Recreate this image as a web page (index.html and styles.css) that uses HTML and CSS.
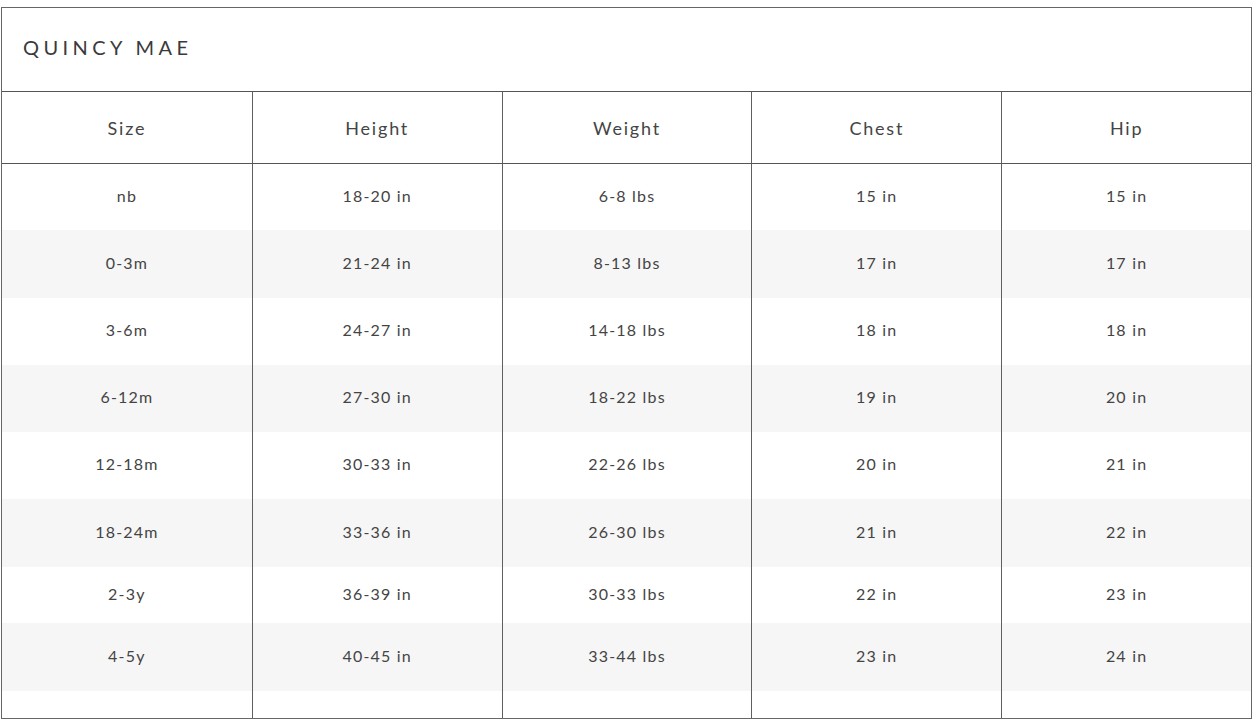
FILE: index.html
```html
<!DOCTYPE html>
<html>
<head>
<meta charset="utf-8">
<link rel="stylesheet" href="styles.css">
</head>
<body>
<div class="page">
<table class="chart">
  <colgroup><col><col><col><col><col></colgroup>
  <thead>
    <tr class="title-row"><th colspan="5" class="title">QUINCY MAE</th></tr>
    <tr class="head-row"><th>Size</th><th>Height</th><th>Weight</th><th>Chest</th><th>Hip</th></tr>
  </thead>
  <tbody>
    <tr class="r66"><td>nb</td><td>18-20 in</td><td>6-8 lbs</td><td>15 in</td><td>15 in</td></tr>
    <tr class="r68 alt"><td>0-3m</td><td>21-24 in</td><td>8-13 lbs</td><td>17 in</td><td>17 in</td></tr>
    <tr class="r67"><td>3-6m</td><td>24-27 in</td><td>14-18 lbs</td><td>18 in</td><td>18 in</td></tr>
    <tr class="r67 alt"><td>6-12m</td><td>27-30 in</td><td>18-22 lbs</td><td>19 in</td><td>20 in</td></tr>
    <tr class="r67"><td>12-18m</td><td>30-33 in</td><td>22-26 lbs</td><td>20 in</td><td>21 in</td></tr>
    <tr class="r68 alt"><td>18-24m</td><td>33-36 in</td><td>26-30 lbs</td><td>21 in</td><td>22 in</td></tr>
    <tr class="r56"><td>2-3y</td><td>36-39 in</td><td>30-33 lbs</td><td>22 in</td><td>23 in</td></tr>
    <tr class="r68 alt"><td>4-5y</td><td>40-45 in</td><td>33-44 lbs</td><td>23 in</td><td>24 in</td></tr>
    <tr class="r27"><td></td><td></td><td></td><td></td><td></td></tr>
  </tbody>
</table>
</div>
</body>
</html>
```
FILE: styles.css
```css
html, body {
  margin: 0;
  padding: 0;
  background: #ffffff;
}
.page {
  padding: 7px 0 0 1px;
}
.chart {
  width: 1251px;
  table-layout: fixed;
  border-collapse: separate;
  border-spacing: 0;
  border: 1px solid #666666;
  font-family: Lato, "Liberation Sans", sans-serif;
  font-weight: 400;
  color: #444444;
}
.chart th, .chart td {
  padding: 0;
  text-align: center;
  font-weight: 400;
  border-left: 1px solid #5f5f5f;
}
.chart th:first-child, .chart td:first-child {
  border-left: none;
}
.title-row th.title {
  height: 78px;
  padding-bottom: 5px;
  border-bottom: 1px solid #555555;
  text-align: left;
  padding-left: 21px;
  font-size: 20px;
  letter-spacing: 4.4px;
  color: #3a3a3a;
}
.head-row th {
  height: 71px;
  border-bottom: 1px solid #555555;
  font-size: 18px;
  letter-spacing: 1.8px;
}
.chart td {
  font-size: 16px;
  letter-spacing: 1.2px;
  vertical-align: middle;
  padding-bottom: 4px;
}
.alt td { background: #f6f6f6; }
.r66 td { height: 62px; }
.r68 td { height: 64px; }
.r67 td { height: 63px; }
.r56 td { height: 52px; }
.r27 td { height: 23px; }
```
